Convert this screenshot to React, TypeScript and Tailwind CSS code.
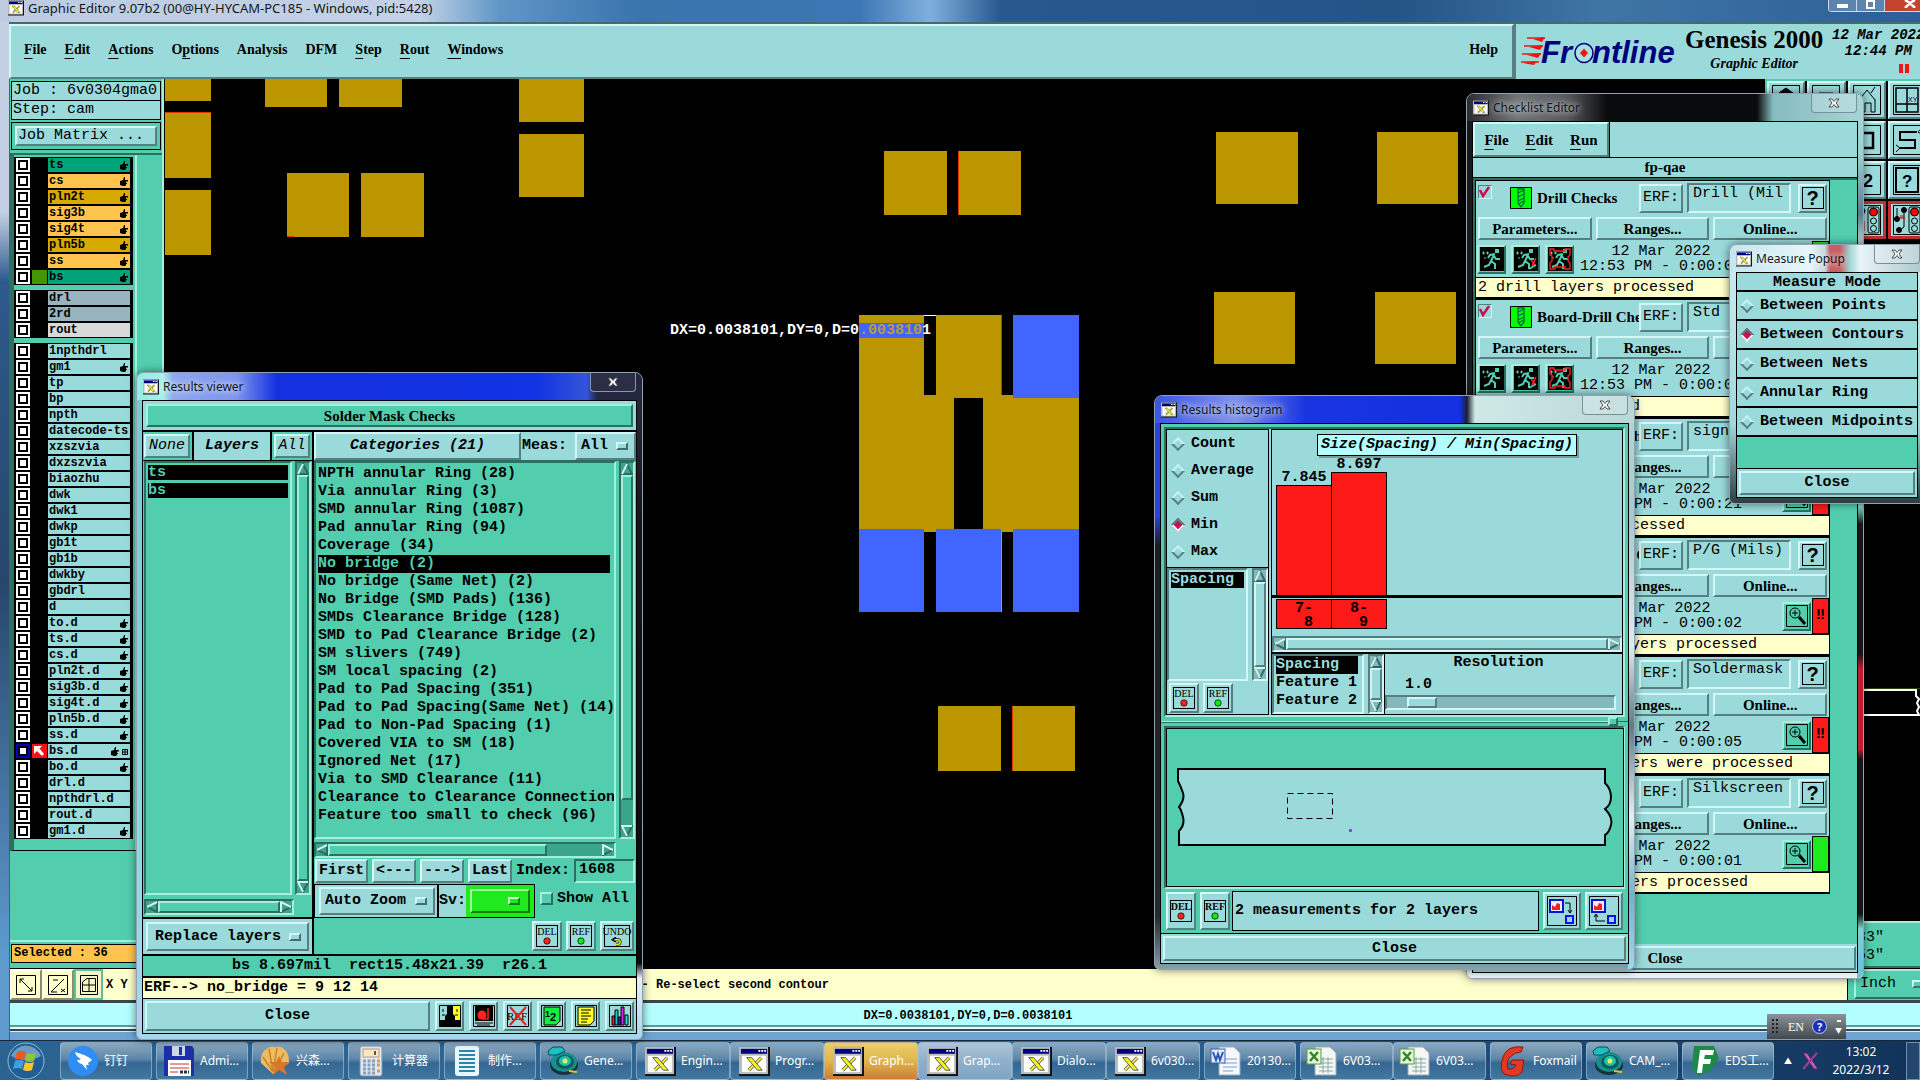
import type { ReactNode } from 'react'
import clsx from 'clsx'

const mono = "font-['Liberation_Mono',monospace] text-[15px] leading-[18px]"
const monoSmall = "font-['Liberation_Mono',monospace] font-bold text-[12px] leading-[16px]"
const serif = "font-['Liberation_Serif',serif] text-[14px] leading-[18px] font-bold"
const serifLg = "font-['Liberation_Serif',serif] text-[15px] leading-[18px] font-bold"
const uiFont = "font-['Noto_Sans','Noto_Sans_CJK_SC',sans-serif]"
const ui = "font-['Noto_Sans','Noto_Sans_CJK_SC',sans-serif] text-[12px] leading-[16px]"

const raised = 'border-2 border-t-[#d3f6f6] border-l-[#d3f6f6] border-b-[#557f80] border-r-[#557f80] bg-[#9bdada]'
const sunken = 'border-2 border-t-[#557f80] border-l-[#557f80] border-b-[#d3f6f6] border-r-[#d3f6f6] bg-[#9bdada]'
const raisedGreen = 'border-2 border-t-[#a5f0dc] border-l-[#a5f0dc] border-b-[#2c7060] border-r-[#2c7060] bg-[#52ceae]'
const sunkenGreen = 'border-2 border-t-[#2c7060] border-l-[#2c7060] border-b-[#a5f0dc] border-r-[#a5f0dc] bg-[#52ceae]'

/* ---------- shared bits ---------- */

function Button({ className, children, label }: { className?: string; children?: ReactNode; label?: string }) {
  return (
    <button type="button" aria-label={label} className={clsx('flex items-center justify-center shrink-0 whitespace-pre', className)}>
      {children}
    </button>
  )
}

function Select({ value, label, className, handle = 'bg-[#9bdada]' }: { value: string; label: string; className?: string; handle?: string }) {
  return (
    <div className={clsx('flex items-center shrink-0', className)}>
      <select aria-label={label} defaultValue={value} className="appearance-none bg-transparent flex-1 min-w-0 pl-1 outline-none">
        <option>{value}</option>
      </select>
      <span className={clsx('w-3 h-2 mr-[6px] shrink-0 border-2 border-t-[#d3f6f6] border-l-[#d3f6f6] border-b-[#3f6f70] border-r-[#3f6f70]', handle)} />
    </div>
  )
}

function Arrow({ dir }: { dir: 'up' | 'down' | 'left' | 'right' }) {
  const d = { up: 'M6 1 L1 11 H11 Z', down: 'M1 1 H11 L6 11 Z', left: 'M1 6 L11 1 V11 Z', right: 'M11 6 L1 1 V11 Z' }[dir]
  const light = { up: 'M6 1 L1 11', down: 'M6 11 L1 1 H11', left: 'M11 1 L1 6', right: 'M1 11 V1 L11 6' }[dir]
  return (
    <svg width="12" height="12" viewBox="0 0 12 12" className="shrink-0">
      <path d={d} fill="none" stroke="#2f6a68" strokeWidth="2" />
      <path d={light} fill="none" stroke="#cdf7ee" strokeWidth="2" />
    </svg>
  )
}

const trough = (green?: boolean) =>
  green
    ? 'border-2 border-t-[#2c7060] border-l-[#2c7060] border-b-[#a5f0dc] border-r-[#a5f0dc] bg-[#3ba58b]'
    : 'border-2 border-t-[#557f80] border-l-[#557f80] border-b-[#d3f6f6] border-r-[#d3f6f6] bg-[#84b8ba]'

function VScroll({ green, thumb = 'flex-1' }: { green?: boolean; thumb?: string }) {
  return (
    <div className={clsx('w-[16px] shrink-0 flex flex-col items-center', trough(green))}>
      <Arrow dir="up" />
      <div className="flex-1 w-full flex flex-col">
        <div className={clsx('w-full', thumb, green ? raisedGreen : raised)} />
      </div>
      <Arrow dir="down" />
    </div>
  )
}

function HScroll({ green, thumb = 'flex-1' }: { green?: boolean; thumb?: string }) {
  return (
    <div className={clsx('h-[16px] shrink-0 flex items-center', trough(green))}>
      <Arrow dir="left" />
      <div className="flex-1 h-full flex">
        <div className={clsx('h-full', thumb, green ? raisedGreen : raised)} />
      </div>
      <Arrow dir="right" />
    </div>
  )
}

function XIcon({ size = 16 }: { size?: number }) {
  return (
    <svg width={size} height={size} viewBox="0 0 32 30" className="shrink-0">
      <rect width="32" height="30" fill="#111" />
      <rect width="30" height="28" fill="#b9b9b9" />
      <rect x="2" y="2" width="27" height="5" fill="#000080" />
      <path d="M20 4h2m1 0h2m1 0h2" stroke="#fff" strokeWidth="2" />
      <rect x="3" y="9" width="25" height="17" fill="#fff" />
      <path d="M23 11 l-13 13" stroke="#555" strokeWidth="3.500" />
      <path d="M23 11 l-13 13" stroke="#f5f51e" strokeWidth="2" />
      <path d="M8 11 h5 l11 13 h-5z" fill="#f5f51e" stroke="#555" />
    </svg>
  )
}

function CloseX({ dark }: { dark?: boolean }) {
  return (
    <button type="button" aria-label="Close window" className={clsx('w-[46px] h-[19px] shrink-0 self-start rounded-b border border-t-0 flex items-center justify-center', dark ? 'border-[#8d93b8] bg-[#2b2e45]' : 'border-[#7b8f98] bg-white/20')}>
      <svg width="12" height="10" viewBox="0 0 12 10">
        <path d="M1 1h3l2 2.500 2-2.500h3L8 5l3 4H8L6 6.500 4 9H1l3-4z" fill="#fff" stroke="#444c55" strokeWidth="1" />
      </svg>
    </button>
  )
}

type WinProps = { title: string; className: string; bar: string; edge?: string; dark?: boolean; children: ReactNode }

// edge paints the glass strip to the right of the client area
function Win({ title, className, bar, edge, dark, children }: WinProps) {
  return (
    <section className={clsx('absolute flex flex-col rounded-t-lg rounded-b-md border border-[#8fa3b5] px-[5px] pb-[5px] overflow-hidden shadow-[0_0_8px_#0008]', className)}>
      {edge && <span className={clsx('absolute right-0 inset-y-0 w-[6px]', edge)} />}
      <header className={clsx('relative h-[27px] shrink-0 -mx-[5px] px-[6px] flex items-center gap-1', bar)}>
        <XIcon />
        <h2 className={clsx(ui, 'flex-1 text-[#101820] [text-shadow:0_0_6px_#ffffffcc,0_0_10px_#ffffff99]')}>{title}</h2>
        <CloseX dark={dark} />
      </header>
      {children}
    </section>
  )
}

function TagIcon({ text, fill }: { text: string; fill: string }) {
  return (
    <span className={clsx('h-[22px] border border-black flex flex-col items-center font-[\'Liberation_Serif\',serif] text-[10px] leading-[11px]', text === 'UNDO' ? 'w-[26px] text-[9px]' : 'w-[22px]')}>
      {text}
      {text === 'UNDO' ? (
        <svg width="12" height="10" viewBox="0 0 12 10">
          <path d="M3 3h4a2.500 2.500 0 0 1 0 5H5M5 1L2 3l3 2" fill="none" stroke="#000" strokeWidth="3" />
          <path d="M3 3h4a2.500 2.500 0 0 1 0 5H5" fill="none" stroke="#ff0" strokeWidth="1.500" />
        </svg>
      ) : (
        <svg width="8" height="8" viewBox="0 0 8 8">
          <circle cx="4" cy="4" r="3.200" fill={fill} stroke="#000" strokeWidth=".7" />
        </svg>
      )}
    </span>
  )
}

function Radio({ name, label, checked }: { name: string; label: string; checked?: boolean }) {
  return (
    <label className="flex items-center gap-[6px] h-[27px] whitespace-nowrap">
      <input
        type="radio"
        name={name}
        defaultChecked={checked}
        className="appearance-none size-[10px] m-[2px] rotate-45 shrink-0 border-2 border-t-[#c9f2f2] border-l-[#c9f2f2] border-b-[#557f80] border-r-[#557f80] checked:bg-[#c8104e] checked:border-t-[#557f80] checked:border-l-[#557f80] checked:border-b-[#f2fcfc] checked:border-r-[#f2fcfc]"
      />
      {label}
    </label>
  )
}

/* ---------- main window: header ---------- */

const menus = [['', 'F', 'ile'], ['', 'E', 'dit'], ['', 'A', 'ctions'], ['O', 'p', 'tions'], ['Analysis', '', ''], ['DFM', '', ''], ['', 'S', 'tep'], ['', 'R', 'out'], ['', 'W', 'indows']]

function MenuItem({ parts }: { parts: string[] }) {
  return (
    <button type="button">
      {parts[0]}
      <span className="underline underline-offset-4">{parts[1]}</span>
      {parts[2]}
    </button>
  )
}

function TitleBar() {
  return (
    <header className="h-[22px] shrink-0 flex items-start bg-[linear-gradient(to_right,#bccbe0_0,#c3d2e6_420px,#5f96c6_500px,#3a74ad_640px,#3d77b3_860px,#7fb0dc_930px,#27598f_1000px,#245587_1400px,#3f75a5_1600px,#2d5f95_1920px)]">
      <div className="flex items-center gap-1 pl-[8px]">
        <XIcon />
        <h1 className={clsx(uiFont, 'text-[13px] leading-[14px] text-[#101820]')}>Graphic Editor 9.07b2 (00@HY-HYCAM-PC185 - Windows, pid:5428)</h1>
      </div>
      <div className="ml-auto -mr-4 flex h-[12px] rounded-b overflow-hidden border border-t-0 border-[#c8dcee] text-white">
        <button type="button" aria-label="Minimize" className="w-[28px] bg-[#5d84ac] border-r border-[#c8dcee] flex items-center justify-center"><span className="w-[11px] h-[4px] bg-white" /></button>
        <button type="button" aria-label="Restore" className="w-[28px] bg-[#5d84ac] border-r border-[#c8dcee] flex items-start justify-center"><span className="size-[9px] border-2 border-white" /></button>
        <button type="button" aria-label="Close" className="w-[50px] bg-[#c4452f] flex items-start justify-center">
          <svg width="12" height="8" viewBox="0 0 12 8"><path d="M1 0l5 3 5-3M1 8l5-5 5 5" stroke="#fff" strokeWidth="2.500" fill="none" /></svg>
        </button>
      </div>
    </header>
  )
}

function MenuBar() {
  return (
    <div className="h-[57px] shrink-0 flex bg-[#9bdada] border-t-2 border-[#49696c]">
      <nav className={clsx(serif, 'flex-1 flex items-center pl-[13px] pr-[14px] pb-[3px] gap-[18px] border-2 border-t-[#d3f6f6] border-l-[#d3f6f6] border-b-[#557f80] border-r-[#557f80]')}>
        {menus.map((m) => <MenuItem key={m.join('')} parts={m} />)}
        <button type="button" className="ml-auto">Help</button>
      </nav>
      <div className="w-[406px] shrink-0 flex items-center gap-1 pl-[5px] border-l-2 border-[#557f80] overflow-hidden">
        <svg width="160" height="34" viewBox="0 0 160 34" className="shrink-0">
          <g fill="#f01414">
            <path d="M12 4l12-2-3 5zM8 12l14-2-3 5zM6 20l14-2-3 5zM2 28l14-2-3 4z" />
            <path d="M6 3h18M3 11h19M1 19h19M0 27h18" stroke="#f01414" strokeWidth="1.500" />
          </g>
          <text x="20" y="28" fontFamily="Liberation Sans" fontSize="31" fontWeight="bold" fontStyle="italic" fill="#00007c">Fr</text>
          <ellipse cx="63" cy="18" rx="9" ry="9.500" fill="#a9e0e0" stroke="#00007c" strokeWidth="1.500" />
          <path d="M63 13.500l4 4.500-4 4.500-4-4.500z" fill="#f01414" />
          <text x="71" y="28" fontFamily="Liberation Sans" fontSize="31" fontWeight="bold" fontStyle="italic" fill="#00007c">ntline</text>
        </svg>
        <div className="shrink-0 text-center font-['Liberation_Serif',serif] font-bold pb-1">
          <p className="text-[25px] leading-[28px]">Genesis 2000</p>
          <p className="text-[14px] leading-[20px] italic">Graphic Editor</p>
        </div>
        <div className="shrink-0 w-[102px] text-center self-start pt-[3px] font-['Liberation_Mono',monospace] font-bold italic text-[14px] leading-[16px]">
          <p className="whitespace-nowrap">12 Mar 2022</p>
          <p>12:44 PM</p>
          <p className="flex justify-center gap-[2px] pt-[5px] pl-[52px]"><span className="w-[4px] h-[9px] bg-[#f01414]" /><span className="w-[4px] h-[9px] bg-[#f01414]" /></p>
        </div>
      </div>
    </div>
  )
}

/* ---------- main window: layer list ---------- */

type Layer = { name: string; bg?: string; hand?: boolean; mark?: string; active?: boolean }
const G = 'bg-[#00a37a]'
const O = 'bg-[#ffc44d]'
const D = 'bg-[#d6aa00]'

const layerGroups: Layer[][] = [
  [
    { name: 'ts', bg: G, hand: true }, { name: 'cs', bg: O, hand: true }, { name: 'pln2t', bg: D, hand: true }, { name: 'sig3b', bg: O, hand: true },
    { name: 'sig4t', bg: O, hand: true }, { name: 'pln5b', bg: D, hand: true }, { name: 'ss', bg: O, hand: true }, { name: 'bs', bg: G, hand: true, mark: 'bg-[#429600]' },
  ],
  [{ name: 'drl', bg: 'bg-[#98b4be]' }, { name: '2rd', bg: 'bg-[#98b4be]' }, { name: 'rout', bg: 'bg-[#d9d9d9]' }],
  [
    ...['1npthdrl', 'gm1*', 'tp', 'bp', 'npth', 'datecode-ts', 'xzszvia', 'dxzszvia', 'biaozhu', 'dwk', 'dwk1', 'dwkp', 'gb1t', 'gb1b', 'dwkby', 'gbdrl', 'd', 'to.d*', 'ts.d*', 'cs.d*', 'pln2t.d*', 'sig3b.d*', 'sig4t.d*', 'pln5b.d*', 'ss.d*'].map((n) => ({ name: n.replace('*', ''), hand: n.endsWith('*') })),
    { name: 'bs.d', hand: true, active: true },
    { name: 'bo.d', hand: true }, { name: 'drl.d' }, { name: 'npthdrl.d' }, { name: 'rout.d' }, { name: 'gm1.d', hand: true },
  ],
]

function LayerRow({ layer }: { layer: Layer }) {
  return (
    <li className="h-[16px] flex bg-black pl-[2px] py-px">
      <input type="checkbox" aria-label={`Show ${layer.name}`} className={clsx('appearance-none size-[14px] shrink-0 bg-white border-2 shadow-[inset_0_0_0_2px_#000]', layer.active ? 'border-[#0000c0]' : 'border-white')} />
      <span className={clsx('w-[15px] ml-[2px] mr-px shrink-0', layer.mark, layer.active && 'bg-[#ff1010]')}>
        {layer.active && <svg width="14" height="14" viewBox="0 0 14 14"><path d="M2 2h8L7.500 4.500 12 10l-2 2-5-5L2 10z" fill="#fff" /></svg>}
      </span>
      <button type="button" className={clsx('w-[82px] flex items-center justify-between whitespace-nowrap pl-px pr-[2px]', layer.bg ?? 'bg-[#9bdada]')}>
        <span>{layer.name}</span>
        {layer.hand && (
          <svg width={layer.active ? 17 : 8} height="9" viewBox={layer.active ? '0 0 17 9' : '0 0 8 9'} className="shrink-0">
            <path d="M0 4l3-1 1-3h1v3h3v1.500H6V6h1v1H6v1h-.500v1H3L0 8z" fill="#000" />
            {layer.active && <path d="M11.500 2.500h5v5h-5zM14 2v6M11 5h6" stroke="#000" fill="none" />}
          </svg>
        )}
      </button>
    </li>
  )
}

function Sidebar() {
  return (
    <aside className="w-[155px] shrink-0 bg-[#52ceae] flex flex-col border-l border-r-2 border-l-[#2c7060] border-r-[#a5f0dc] pt-[2px]">
      <div className={clsx(mono, 'mx-px border border-black bg-[#9bdada] divide-y divide-black')}>
        <p className="h-[19px] px-px whitespace-nowrap">Job : 6v0304gma0</p>
        <p className="h-[18px] px-px">Step: cam</p>
      </div>
      <div className="mx-px mt-[2px] border border-black p-[3px]">
        <Button className={clsx(mono, raised, 'w-full h-[20px] justify-start pl-px')}>Job Matrix ...</Button>
      </div>
      <div className="mt-[3px] border-t-2 border-[#2c7060] flex">
        <div className="w-[127px] border-l-4 border-[#2c7060] border-b border-r-2 border-b-black border-r-[#a5f0dc] pt-[2px] pb-[11px] flex flex-col gap-[5px] font-['Liberation_Mono',monospace] font-bold text-[12px] leading-[14px]">
          {layerGroups.map((g, i) => (
            <ul key={i} className="w-[119px]">
              {g.map((l) => <LayerRow key={l.name} layer={l} />)}
            </ul>
          ))}
        </div>
      </div>
      <div className="mt-auto border-t-2 border-[#a5f0dc] pt-[2px] pb-[5px] pl-px">
        <p className="h-[19px] border border-black bg-[#ffc44d] pl-[2px] font-['Liberation_Mono',monospace] font-bold text-[12px] leading-[17px]">Selected : 36</p>
      </div>
    </aside>
  )
}

/* ---------- main window: canvas ---------- */

// x, y, width, height in window coordinates
const pads = [
  [165, 79, 46, 22], [165, 113, 46, 65], [165, 190, 46, 65], [265, 79, 62, 28], [339, 79, 63, 28], [287, 173, 62, 64], [361, 173, 63, 64],
  [519, 79, 65, 43], [519, 134, 65, 63], [884, 151, 63, 64], [959, 151, 62, 64], [1216, 132, 82, 72], [1214, 292, 81, 72], [1377, 132, 81, 72], [1375, 292, 81, 72],
  [859, 315, 65, 214], [936, 315, 65, 83], [924, 395, 30, 137], [954, 395, 29, 3], [983, 395, 96, 137], [938, 706, 63, 65], [1013, 706, 62, 65],
]
const selected = [[1013, 315, 66, 83], [859, 529, 65, 83], [936, 529, 65, 83], [1013, 529, 66, 83], [859, 323, 65, 15]]
const edges = [[165, 112, 46, 1], [287, 236, 7, 1], [958, 151, 1, 64], [1001, 315, 1, 80], [1012, 706, 1, 65]]

function Canvas() {
  return (
    <main className="relative flex-1 min-w-0 bg-black overflow-hidden">
      <svg className="absolute inset-0 size-full">
        <g transform="translate(-164 -79)" shapeRendering="crispEdges">
          {pads.map(([x, y, w, h], i) => <rect key={i} x={x} y={y} width={w} height={h} fill="#bc9600" />)}
          {selected.map(([x, y, w, h], i) => <rect key={i} x={x} y={y} width={w} height={h} fill="#4066ff" />)}
          {edges.map(([x, y, w, h], i) => <rect key={i} x={x} y={y} width={w} height={h} fill="#e03400" />)}
          <rect x="924" y="315" width="12" height="1" fill="#fff" />
          <rect x="1001" y="532" width="1" height="80" fill="#00d8ff" />
        </g>
      </svg>
      <p className={clsx(mono, 'absolute left-[506px] top-[243px] font-bold text-white whitespace-nowrap')}>
        DX=0.0038101,DY=0,D=0<span className="text-[#bc9a3c]">.003810</span>1
      </p>
    </main>
  )
}

/* ---------- main window: right tool box ---------- */

const frame = <path d="M.500.500h27v29H.500z" />
const blank = <g>{frame}<path d="M6 7h16v16H6z" /></g>
const lights = (x: number) => (
  <g>
    <rect x={x} y="2" width="11" height="26" rx="2" />
    <circle cx={x + 5.5} cy="7" r="4" fill="red" />
    <circle cx={x + 5.5} cy="16" r="3" />
    <circle cx={x + 5.5} cy="23.500" r="3" />
  </g>
)

const tools: ReactNode[] = [
  <g>{frame}<path d="M14 3l7 5h-4v9h-6V8H7z" fill="#000" /></g>,
  <g>{frame}<path d="M7 8h14M14 8v14" /></g>,
  <g>{frame}<path d="M6 15L14 5l8 10M8 14v13h4v-9h6v9h4V14M18 8l4-6" /></g>,
  <g>{frame}<path d="M3 3h22v24H3zM14 3v24M3 19h22" strokeWidth="1.500" /><text x="15" y="17" fontSize="7" fill="#000" stroke="none">XY</text></g>,
  blank,
  blank,
  <g>{frame}<path d="M4 8h16v15H4z" strokeWidth="2.500" /></g>,
  <g>{frame}<path d="M24 7H7v8h15v8H7" strokeWidth="2" /><path d="M28 4l-3 3 3 2M3 20l4 3-4 4" /></g>,
  blank,
  blank,
  <g>{frame}<text x="4" y="22" fontSize="18" fontWeight="bold" fill="#000" stroke="none">:2</text></g>,
  <g>{frame}<path d="M3 3h22v24H3z" strokeWidth="2" /><text x="9" y="22" fontSize="17" fontWeight="bold" fill="#000" stroke="none">?</text></g>,
  blank,
  blank,
  <g>{frame}{lights(15)}<circle cx="9" cy="6" r="3" fill="#00c" /><path d="M5 16h6v10" stroke="#d00" /></g>,
  <g>{frame}{lights(16)}<g fill="#000"><circle cx="4" cy="14" r="2.500" /><circle cx="11" cy="5" r="2.500" /><circle cx="6" cy="25" r="2.500" /></g><path d="M4 3v10M11 5v17l-4 3" /><path d="M6 13h6M8 10v3M10 10v3" stroke="#d00" /></g>,
]

function ToolBox() {
  return (
    <aside className="w-[155px] shrink-0 bg-black flex flex-col overflow-hidden">
      <div className="w-[163px] pl-[2px] pt-[2px] grid grid-cols-4 bg-[#52ceae]">
        {tools.map((t, i) => (
          <button key={i} type="button" aria-label={`Tool ${i + 1}`} className="h-[40px] bg-black pb-[2px] pr-[2px]">
            <span className={clsx('size-full flex items-center justify-center', raised, i > 11 && 'outline-3 -outline-offset-3 outline-[#c03030]')}>
              <svg width="28" height="30" viewBox="0 0 28 30" fill="none" stroke="#000" fontFamily="Liberation Sans" className="shrink-0">{t}</svg>
            </span>
          </button>
        ))}
      </div>
      <svg width="155" height="30" className="mt-[447px] shrink-0">
        <path d="M97 2h54v6l3 3-2 4 2 4-2 4 2 4H97" stroke="#fff" strokeWidth="2" fill="none" />
        <path d="M94 0h61" stroke="#4f8a10" />
      </svg>
      <div className={clsx(mono, raisedGreen, 'mt-auto h-[47px] -mr-1 pl-[90px] pt-[6px] leading-[15px]')}>
        <p>33"</p>
        <p>53"</p>
      </div>
    </aside>
  )
}

function BottomBars() {
  const cell = 'w-[32px] h-[31px] shrink-0 border-2 border-t-[#ffffee] border-l-[#ffffee] border-b-[#8c8c70] border-r-[#8c8c70]'
  return (
    <footer className="shrink-0 flex flex-col border-l border-[#2c7060]">
      <div className="h-[32px] flex items-center bg-[#ffffcc] border-t border-black">
        <Button label="Measure" className={clsx(cell, 'bg-[#ffffcc]')}><svg width="22" height="22" fill="none" stroke="#000"><path d="M1.500 1.500h19v19h-19zM5 5l12 12M5 9V5h4M17 13v4h-4" /></svg></Button>
        <Button label="Offset" className={clsx(cell, 'bg-[#ffffcc] border-x-black/70')}><svg width="22" height="22" fill="none" stroke="#000"><path d="M1.500 1.500h19v19h-19zM4 18L17 5M4 18h6M6 6h5M14 15l4 3M18 15l-4 3" /></svg></Button>
        <Button label="Grid" className="w-[29px] h-[31px] shrink-0 border-2 border-[#5fbfa0] bg-[#f4f6c4]"><svg width="20" height="22" fill="none" stroke="#000"><path d="M1.500 1.500h17v19h-17zM8 4.500h8.500v13h-13V8zM10 4v14M4 11h13" /></svg></Button>
        <p className={clsx(monoSmall, 'pl-[3px] whitespace-pre')}>X Y</p>
        <p className={clsx(monoSmall, 'pl-[514px] whitespace-nowrap')}>- Re-select second contour</p>
        <div className="ml-auto w-[73px] self-stretch shrink-0 border-l border-black bg-[#52ceae] overflow-hidden">
          <Select label="Units" value="Inch" handle="bg-[#52ceae]" className={clsx(mono, raisedGreen, 'w-[78px] h-[30px] ml-[6px]')} />
        </div>
      </div>
      <div className="h-[31px] border-t-[3px] border-b-2 border-t-[#37474b] border-b-[#37474b] shadow-[inset_0_-2px_0_#e4ffff,inset_0_-4px_0_#5c9a9c] bg-[#b3ffff] flex items-center justify-center pl-[6px]">
        <p className={monoSmall}>DX=0.0038101,DY=0,D=0.0038101</p>
      </div>
      <div className="h-[9px] bg-[#6ea4cf] border-t border-[#d0ecf6]" />
    </footer>
  )
}

/* ---------- results viewer ---------- */

const categories = [
  'NPTH annular Ring (28)', 'Via annular Ring (3)', 'SMD annular Ring (1087)', 'Pad annular Ring (94)', 'Coverage (34)', 'No bridge (2)', 'No bridge (Same Net) (2)',
  'No Bridge (SMD Pads) (136)', 'SMDs Clearance Bridge (128)', 'SMD to Pad Clearance Bridge (2)', 'SM slivers (749)', 'SM local spacing (2)', 'Pad to Pad Spacing (351)',
  'Pad to Pad Spacing(Same Net) (14)', 'Pad to Non-Pad Spacing (1)', 'Covered VIA to SM (18)', 'Ignored Net (17)', 'Via to SMD Clearance (11)',
  'Clearance to Clearance Connection', 'Feature too small to check (96)',
]

const footIcons = [
  <g key="a"><path d="M0 0h11v22H0z" fill="#9bdada" /><path d="M11 0h11v22H11z" fill="#ff2" /><path d="M8 0h6v9l2 2v4h6v7H0v-7h6v-4l2-2z" fill="#000" /><path d="M4 4v3M3 10h3M18 4v3M16 10h3" stroke="#000" /></g>,
  <g key="b"><path d="M2 1h18v15H2z" fill="#000" /><circle cx="9" cy="10" r="4.500" fill="#f22" /><path d="M15 3v11H9" stroke="#f22" strokeWidth="1.500" fill="none" /><path d="M2 18h18M4 20h13" stroke="#000" /></g>,
  <g key="c"><text x="0" y="15" fontSize="11" fontFamily="Liberation Serif">REF</text><path d="M3 2l16 18M19 2L3 20" stroke="#e02020" strokeWidth="2" /></g>,
  <g key="d"><path d="M3 2h16v14l-4 4H3z" fill="#10f040" stroke="#000" /><text x="4" y="12" fontSize="9" fontWeight="bold" fontFamily="Liberation Sans">1</text><text x="9" y="16" fontSize="11" fontWeight="bold" fontFamily="Liberation Sans">2</text></g>,
  <g key="e"><path d="M3 2h16v14l-4 4H3z" fill="#ff2" stroke="#000" /><path d="M6 5h10M6 8h8M6 11h10M6 14h7M6 17h6" stroke="#000" /></g>,
  <g key="f" stroke="#000"><path d="M3 11h3v9H3z" fill="#e22" /><path d="M6 5h3v15H6z" fill="#1cc" /><path d="M9 12h3v8H9z" fill="#22d" /><path d="M12 2h3v18h-3z" fill="#d2e" /><path d="M16 10h3v10h-3z" fill="#3dd" /></g>,
]

function ResultsViewer() {
  return (
    <Win
      title="Results viewer"
      dark
      edge="bg-[linear-gradient(to_bottom,#2a2d3a_0,#14161a_150px,#08090a_590px,#e8f0f4_605px,#a9d4f0_664px)]"
      className="left-[136px] top-[372px] w-[507px] bg-[linear-gradient(to_bottom,#79c9cf_0,#8fd9e2_500px,#a9d4f0_640px)]"
      bar="bg-[linear-gradient(to_right,#93ece2_0,#a9f0e8_26px,#8fa8ee_36px,#7d94ee_100px,#1430e0_140px,#1234e4_400px,#3454d8_450px,#23283f_460px,#23283f_507px)]"
    >
      <div className={clsx(mono, 'relative border border-black bg-black flex flex-col gap-[2px]')}>
        <div className="bg-[#9bdada] p-[3px]">
          <p className={clsx(serifLg, raisedGreen, 'h-[23px] flex items-center justify-center')}>Solder Mask Checks</p>
        </div>
        <div className="flex gap-[2px]">
          <div className="w-[169px] shrink-0 flex flex-col bg-[#52ceae]">
            <div className="flex h-[29px] border-b border-black italic">
              <Button className={clsx(raised, 'w-[46px] m-[2px] ml-px')}>None</Button>
              <p className="flex-1 border-x-2 border-black bg-[#9bdada] font-bold flex items-center justify-center">Layers</p>
              <Button className={clsx(raised, 'w-[36px] m-[2px]')}>All</Button>
            </div>
            <div className="flex-1 flex gap-[3px] px-px">
              <ul className={clsx(sunkenGreen, 'flex-1 p-[2px] flex flex-col gap-[3px] text-[#52ceae] leading-[15px] font-bold')}>
                <li className="bg-black">ts</li>
                <li className="bg-black">bs</li>
              </ul>
              <VScroll green />
            </div>
            <div className="pt-[4px] pb-[2px] pl-px pr-[18px]"><HScroll green /></div>
            <div className="border-t-2 border-black bg-[#9bdada] p-[3px]">
              <Select label="Layer action" value="Replace layers" className={clsx(raised, 'h-[29px] font-bold pl-[3px]')} />
            </div>
          </div>
          <div className="flex-1 min-w-0 flex flex-col bg-[#52ceae] font-bold">
            <div className="flex items-center h-[29px] bg-[#9bdada] border-b border-[#2c7060]">
              <Button className={clsx(raised, 'w-[207px] h-[28px] italic')}>Categories (21)</Button>
              <p className="flex-1 pl-px">Meas:</p>
              <Select label="Measurements" value="All" className={clsx(raised, 'w-[61px] h-[28px]')} />
            </div>
            <div className="flex gap-[3px] pr-px">
              <ul className={clsx(sunkenGreen, 'flex-1 min-w-0 pt-[2px] pl-[2px] pb-[12px]')}>
                {categories.map((c) => (
                  <li key={c} className={clsx('whitespace-nowrap overflow-hidden', c === 'No bridge (2)' && 'bg-black text-[#52ceae] mr-1')}>{c}</li>
                ))}
              </ul>
              <VScroll green thumb="h-[325px]" />
            </div>
            <div className="pt-[3px] pr-[20px]"><HScroll green thumb="w-[80%]" /></div>
            <div className="flex items-center gap-[4px] h-[26px] px-px">
              <Button className={clsx(raised, 'w-[53px] h-[24px]')}>First</Button>
              <Button className={clsx(raised, 'w-[44px] h-[24px]')}>{'<---'}</Button>
              <Button className={clsx(raised, 'w-[44px] h-[24px]')}>{'--->'}</Button>
              <Button className={clsx(raised, 'w-[44px] h-[24px]')}>Last</Button>
              <label htmlFor="index">Index:</label>
              <input id="index" defaultValue="1608" className={clsx(sunkenGreen, 'flex-1 min-w-0 h-[24px] pl-[3px] pb-[3px] outline-none')} />
            </div>
            <div className="flex items-center h-[34px]">
              <div className="flex self-stretch border border-black bg-[#9bdada]">
                <Select label="Zoom mode" value="Auto Zoom" className={clsx(raised, 'w-[116px] m-[2px] ml-[4px]')} />
                <label htmlFor="sv" className="border-l-2 border-black flex items-center">Sv:</label>
                <div className="bg-[#1eea1e] p-1 w-[68px] flex">
                  <div className="flex-1 flex items-center justify-end pr-2 border-2 border-t-[#a0ffa0] border-l-[#a0ffa0] border-b-[#108010] border-r-[#108010]">
                    <select id="sv" className="appearance-none bg-transparent flex-1 w-2"><option></option></select>
                    <span className="w-3 h-2 border-2 border-t-[#d3ffd3] border-l-[#d3ffd3] border-b-[#108010] border-r-[#108010]" />
                  </div>
                </div>
              </div>
              <label className="flex items-center gap-1 pl-[5px] pb-[5px] whitespace-nowrap">
                <input type="checkbox" className={clsx(raisedGreen, 'appearance-none size-[13px] border')} />
                Show All
              </label>
            </div>
            <div className="flex-1 min-h-[36px] flex items-center justify-end gap-[4px] pr-[2px] font-normal">
              <Button label="DEL" className={clsx(raised, 'size-[30px]')}><TagIcon text="DEL" fill="#f22" /></Button>
              <Button label="REF" className={clsx(raised, 'size-[30px]')}><TagIcon text="REF" fill="#1e1" /></Button>
              <Button label="UNDO" className={clsx(raised, 'w-[34px] h-[30px]')}><TagIcon text="UNDO" fill="#ff0" /></Button>
            </div>
          </div>
        </div>
        <p className="h-[20px] bg-[#52ceae] font-bold text-center leading-[20px] whitespace-pre">bs 8.697mil  rect15.48x21.39  r26.1</p>
        <p className="h-[20px] bg-[#ffffcc] font-bold pl-px leading-[20px]">ERF--&gt; no_bridge = 9 12 14</p>
        <div className="bg-[#9bdada] flex items-center gap-[5px] p-[2px] -mt-px">
          <Button className={clsx(raised, 'flex-1 h-[30px] font-bold')}>Close</Button>
          {footIcons.map((ic, i) => (
            <Button key={i} label={`Result tool ${i + 1}`} className={clsx(raised, 'w-[29px] h-[30px]')}>
              <svg width="22" height="22" viewBox="0 0 22 22" className="shrink-0">
                {ic}
                <path d="M.500.500h21v21H.500z" fill="none" stroke="#000" />
              </svg>
            </Button>
          ))}
        </div>
      </div>
    </Win>
  )
}

/* ---------- checklist editor ---------- */

const checks = [
  { name: 'Drill Checks', erf: 'Drill (Mil', time: '0:00:01', msg: '2 drill layers processed', flag: 'bg-[#1eea1e]' },
  { name: 'Board-Drill Checks', erf: 'Std', time: '0:00:01', msg: '2 layers processed', flag: 'bg-[#1eea1e]' },
  { name: 'Signal Layer Checks', erf: 'sign', time: '0:00:21', msg: '4 etch layers processed', flag: 'bg-[#ff1a1a]' },
  { name: 'Power/Ground Chk', erf: 'P/G (Mils)', time: '0:00:02', msg: '2 power/ground layers processed', flag: 'bg-[#ff1a1a]' },
  { name: 'Solder Mask', erf: 'Soldermask', time: '0:00:05', msg: '2 solder mask layers were processed', flag: 'bg-[#ff1a1a]' },
  { name: 'Silkscreen', erf: 'Silkscreen', time: '0:00:01', msg: '2 silk screen layers processed', flag: 'bg-[#1eea1e]' },
]

function Runner({ kind }: { kind: number }) {
  return (
    <svg width="24" height="24" viewBox="0 0 24 24" className="bg-black shrink-0">
      <path d="M15 2h4v4h-4z" fill="#52ceae" />
      <path d="M15 7l-5 1-2 3M14 8l-3 6 4 3v5M11 14l-2 4-5 2M14 9l2 3h4" fill="none" stroke="#52ceae" strokeWidth="2" />
      <path d="M2 6h3M3.500 4.500v3M6 6h3M7.500 4.500v3M4 11h2" stroke="#52ceae" />
      {kind === 1 && <path d="M18 19l4-8M17 13l4 5" stroke="#f22" strokeWidth="1.500" />}
      {kind === 1 && <path d="M15 22l7-4" stroke="#52ceae" strokeWidth="1.500" />}
      {kind === 2 && <path d="M2 2h4v2h11V2h5v6l-2 2v4l2 2v6h-5v-2H7v2H2v-6l2-2V9L2 8z" fill="none" stroke="#f22" strokeWidth="1.300" />}
    </svg>
  )
}

function CheckRow({ check }: { check: (typeof checks)[number] }) {
  const b = clsx(serifLg, raised, 'flex-1 h-[23px]')
  return (
    <li className="border-x border-t border-black border-b-2 bg-[#9bdada] flex flex-col">
      <div className="flex items-center h-[34px] px-[2px]">
        <label className="flex items-center shrink-0">
          <input type="checkbox" aria-label={check.name} defaultChecked className="sr-only" />
          <svg width="14" height="14" viewBox="0 0 14 14" className="mb-[12px]">
            <path d="M13.500.500v13H.500" fill="none" stroke="#d3f6f6" />
            <path d="M.500 13.500V.500h13" fill="none" stroke="#557f80" />
            <path d="M2 5l3 6 6-9" fill="none" stroke="#c8104e" strokeWidth="2.500" />
          </svg>
        </label>
        <svg width="22" height="22" viewBox="0 0 22 22" className="ml-[18px] shrink-0">
          <path d="M.500.500h21v21H.500z" fill="#0f0" stroke="#000" />
          <path d="M8 2h6v14l-3 4-3-4zM8 6l6-3M8 10l6-3M8 14l6-3M8 17l6-3" fill="none" stroke="#064" strokeWidth="1.300" />
        </svg>
        <p className={clsx(serifLg, 'w-[107px] pl-[5px] shrink-0 whitespace-nowrap overflow-hidden')}>{check.name}</p>
        <Button className={clsx(raised, 'w-[44px] h-[29px]')}>ERF:</Button>
        <input aria-label={`${check.name} ERF`} defaultValue={check.erf} className={clsx(sunken, 'w-[104px] h-[30px] ml-[4px] pl-[4px] pb-[9px] outline-none')} />
        <Button label="Help" className={clsx(raised, 'w-[29px] h-[29px] ml-auto')}><span className="size-[22px] border border-black flex items-center justify-center font-bold text-[20px] font-['Liberation_Sans',sans-serif]">?</span></Button>
      </div>
      <div className="flex gap-[4px] px-[2px] mt-[2px]">
        <Button className={b}>Parameters...</Button>
        <Button className={b}>Ranges...</Button>
        <Button className={b}>Online...</Button>
      </div>
      <div className="flex items-center h-[36px] mt-px pl-px gap-[5px]">
        {[0, 1, 2].map((k) => <Button key={k} label="Run" className={clsx(raisedGreen, 'size-[29px]')}><Runner kind={k} /></Button>)}
        <p className="w-[164px] leading-[15px] text-center whitespace-nowrap">12 Mar 2022<br />12:53 PM - {check.time}</p>
        <Button label="Zoom to results" className={clsx(raisedGreen, 'w-[29px] h-[29px] ml-auto')}>
          <svg width="22" height="22" fill="none" stroke="#000"><path d="M.500.500h21v21H.500z" /><circle cx="9" cy="8" r="5" /><path d="M9 5v6M6 8h6" /><path d="M13 12l6 7" strokeWidth="3" /></svg>
        </Button>
        <span className={clsx('w-[17px] self-stretch border border-black flex items-center justify-center font-bold -ml-[4px]', check.flag)}>{check.flag.includes('ff1a') && '‼'}</span>
      </div>
      <p className="h-[20px] border-t border-black bg-[#ffffcc] pl-[2px] leading-[19px]">{check.msg}</p>
    </li>
  )
}

function ChecklistEditor() {
  return (
    <Win
      title="Checklist Editor"
      edge="bg-[linear-gradient(to_bottom,#a8d5d6_0,#9fd0d4_60px,#5a7a90_120px,#d8e8ee_160px,#6a8c98_405px,#7fd8d0_412px,#141618_430px,#141618_560px,#c41c2c_575px,#c41c2c_655px,#141618_665px,#141618_820px,#7fd0d0_835px,#6fc4dc_870px)]"
      className="left-[1466px] top-[93px] w-[398px] h-[886px] bg-[linear-gradient(to_bottom,#16181a_0,#1d1f22_600px,#c8dfe2_870px,#f4f6f6_886px)]"
      bar="bg-[linear-gradient(to_right,#2a2d30_0,#70757a_50px,#55595d_100px,#0a0b0c_140px,#0a0b0c_290px,#86bcc0_306px,#a8d5d6_398px)]"
    >
      <div className={clsx(mono, 'relative flex-1 flex flex-col border border-black bg-[#9bdada]')}>
        <nav className={clsx(serifLg, raised, 'w-[136px] h-[35px] flex items-center justify-center gap-[17px] outline outline-black')}>
          <MenuItem parts={['', 'F', 'ile']} />
          <MenuItem parts={['', 'E', 'dit']} />
          <MenuItem parts={['', 'R', 'un']} />
        </nav>
        <p className={clsx(serifLg, 'h-[21px] border-y border-black text-center')}>fp-qae</p>
        <div className="flex-1 border-t-2 border-l-2 border-[#2c7060] bg-[#52ceae] pr-[27px]">
          <ul>{checks.map((c) => <CheckRow key={c.erf} check={c} />)}</ul>
        </div>
        <Button className={clsx(serifLg, raised, 'h-[24px] mx-px my-[2px]')}>Close</Button>
      </div>
    </Win>
  )
}

/* ---------- results histogram ---------- */

const bars = [
  { value: '7.845', range: ['7-', '8'], height: 'h-[110px]' },
  { value: '8.697', range: ['8-', '9'], height: 'h-[123px]' },
]

function Histogram() {
  return (
    <Win
      title="Results histogram"
      edge="bg-[linear-gradient(to_bottom,#b8d8d6_0,#a8c8cc_120px,#dcecee_250px,#5c7c84_330px,#e4f0f2_420px,#6fb4c4_500px,#9fdcf0_575px)]"
      className="left-[1154px] top-[395px] w-[481px] bg-[linear-gradient(to_bottom,#2c40dc_0,#2c40dc_120px,#1b1d22_150px,#25292d_520px,#8aa4b0_575px)]"
      bar="bg-[linear-gradient(to_right,#3a55e4_0,#7f92ea_80px,#1a34e0_150px,#1430e0_305px,#1a2030_312px,#cfe8e6_320px,#b8d8d6_481px)]"
    >
      <div className={clsx(mono, 'relative border border-black bg-[#52ceae] font-bold flex flex-col')}>
        <div className="m-[3px] mb-0 border-2 border-t-[#2c7060] border-l-[#2c7060] border-b-[#a5f0dc] border-r-[#a5f0dc] bg-[#9bdada] flex gap-[2px]">
          <div className="w-[103px] shrink-0 flex flex-col border border-black">
            <fieldset className="border-b border-black h-[138px] pl-[4px]">
              {['Count', 'Average', 'Sum', 'Min', 'Max'].map((l) => <Radio key={l} name="stat" label={l} checked={l === 'Min'} />)}
            </fieldset>
            <div className="flex gap-1 h-[113px]">
              <div className={clsx(sunken, 'flex-1 p-[2px]')}><p className="bg-black text-[#9bdada] leading-[16px]">Spacing</p></div>
              <VScroll />
            </div>
            <div className="flex items-center gap-1 h-[33px] pl-[2px] font-normal">
              <Button label="DEL" className={clsx(raised, 'size-[30px]')}><TagIcon text="DEL" fill="#f22" /></Button>
              <Button label="REF" className={clsx(raised, 'size-[30px]')}><TagIcon text="REF" fill="#1e1" /></Button>
            </div>
          </div>
          <div className="flex-1 min-w-0 flex flex-col border border-black">
            <div className="h-[168px] flex flex-col border-b-[3px] border-black">
              <p className="self-center mt-[4px] h-[22px] px-[3px] border border-black bg-[#b3ffff] italic leading-[20px] whitespace-nowrap shadow-[2px_2px_0_#7f9a9a] shrink-0">Size(Spacing) / Min(Spacing)</p>
              <div className="flex items-end flex-1 min-h-0 pl-[4px] text-center leading-[15px]">
                {bars.map((b) => (
                  <div key={b.value} className="w-[56px] -mr-px">
                    <p className="whitespace-nowrap">{b.value}</p>
                    <div className={clsx('bg-[#ff1a1a] border border-b-0 border-black', b.height)} />
                  </div>
                ))}
              </div>
            </div>
            <div className="flex pl-[4px] pt-px h-[38px] text-center leading-[14px]">
              {bars.map((b) => (
                <p key={b.value} className="w-[56px] h-[30px] -mr-px pt-[2px] bg-[#ff1a1a] border border-black">
                  {b.range[0]}<br />&nbsp;{b.range[1]}
                </p>
              ))}
            </div>
            <HScroll />
            <div className="flex flex-1 border-t-2 border-black">
              <ul className={clsx(sunken, 'w-[92px] shrink-0 pl-[2px] whitespace-nowrap')}>
                <li className="bg-black text-[#9bdada] mr-1">Spacing</li>
                <li>Feature 1</li>
                <li>Feature 2</li>
              </ul>
              <div className="pl-1 flex"><VScroll /></div>
              <div className="flex-1 border-l border-black pr-[6px] flex flex-col">
                <label htmlFor="res" className="text-center pr-1">Resolution</label>
                <p className="pl-[20px] pt-1">1.0</p>
                <input id="res" type="range" defaultValue={10} className="w-full h-[15px] mt-px appearance-none border-2 border-t-[#557f80] border-l-[#557f80] border-b-[#d3f6f6] border-r-[#d3f6f6] bg-[#84b8ba] [&::-webkit-slider-thumb]:appearance-none [&::-webkit-slider-thumb]:w-[30px] [&::-webkit-slider-thumb]:h-[11px] [&::-webkit-slider-thumb]:bg-[#9bdada] [&::-webkit-slider-thumb]:border-2 [&::-webkit-slider-thumb]:border-t-[#d3f6f6] [&::-webkit-slider-thumb]:border-l-[#d3f6f6] [&::-webkit-slider-thumb]:border-b-[#557f80] [&::-webkit-slider-thumb]:border-r-[#557f80]" />
              </div>
            </div>
          </div>
        </div>
        <div className="h-[9px] flex items-center">
          <span className="flex-1 h-[2px] bg-[#a5f0dc] border-b border-[#2c7060]" />
          <span className={clsx(raisedGreen, 'w-[10px] h-[9px]')} />
          <span className="w-[10px] h-px bg-[#2c7060]" />
        </div>
        <div className={clsx(sunkenGreen, 'mx-[3px]')}>
          <svg width="458" height="159" className="block outline outline-black -outline-offset-1">
            <path d="M12 41H439v14q6 6 6 14t-6 12q8 8 6 16t-6 10v10H13v-14q6-6 4-14t-4-10q6-8 4-14t-5-12z" fill="#9bdada" stroke="#000" strokeWidth="2" />
            <rect x="121.500" y="65.500" width="45" height="25" fill="none" stroke="#000" strokeDasharray="6 4" />
            <rect x="183" y="101" width="3" height="3" fill="#e020e0" />
          </svg>
        </div>
        <div className="flex items-center gap-[4px] px-[5px] py-[2px]">
          <Button label="DEL" className={clsx(raised, 'w-[30px] h-[38px]')}><TagIcon text="DEL" fill="#f22" /></Button>
          <Button label="REF" className={clsx(raised, 'w-[30px] h-[38px]')}><TagIcon text="REF" fill="#1e1" /></Button>
          <p className="flex-1 h-[40px] border border-black bg-[#9bdada] flex items-center pl-[2px] -ml-[2px]">2 measurements for 2 layers</p>
          {[0, 1].map((k) => (
            <Button key={k} label="Histogram view" className={clsx(raised, 'w-[38px] h-[38px]')}>
              <svg width="30" height="30" fill="none">
                <path d="M.500.500h29v29H.500z" stroke="#000" />
                <rect x="3" y="4" width="13" height="12" fill="#eef" stroke="#11c" strokeWidth="2" />
                <path d="M5 14V9l3 2 2-4 3 1v6z" fill="#e22" />
                <rect x="19" y="20" width="7" height="7" stroke="#11e" strokeWidth="2" />
                {k === 0 ? <path d="M18 7h5v10M21 14l2 3 2-3" stroke="#000" /> : <path d="M16 25H7v-6M5 21l2-3 2 3" stroke="#000" />}
              </svg>
            </Button>
          ))}
        </div>
        <div className="border-t border-black bg-[#9bdada] p-[2px]">
          <Button className={clsx(raised, 'w-full h-[25px]')}>Close</Button>
        </div>
      </div>
    </Win>
  )
}

/* ---------- measure popup ---------- */

function MeasurePopup() {
  return (
    <Win
      title="Measure Popup"
      className="left-[1729px] top-[244px] w-[198px] bg-[linear-gradient(to_bottom,#cfeef0_0,#9fd8dc_180px,#2a3c40_259px)]"
      bar="bg-[linear-gradient(to_right,#c4e6ee_0,#e6f6fa_80px,#c9d8dc_95px,#c85c60_100px,#c85c60_110px,#9fd8d4_120px,#e8f4f6_130px,#a8c4ca_198px)]"
    >
      <div className={clsx(mono, 'relative border border-black bg-[#9bdada] font-bold ml-px mr-[3px]')}>
        <p className="h-[17px] leading-[19px] text-center">Measure Mode</p>
        {['Points', 'Contours', 'Nets', 'Annular Ring', 'Midpoints'].map((m) => (
          <div key={m} className="h-[29px] border-t-2 border-black flex items-center pl-[3px]">
            <Radio name="measure" label={m === 'Annular Ring' ? m : `Between ${m}`} checked={m === 'Contours'} />
          </div>
        ))}
        <div className="h-[33px] bg-[#52ceae] border-t-2 border-black" />
        <div className="border-t border-black p-[2px]">
          <Button className={clsx(raised, 'w-full h-[24px]')}>Close</Button>
        </div>
      </div>
    </Win>
  )
}

/* ---------- taskbar ---------- */

const svg = (children: ReactNode) => <svg width="32" height="32" viewBox="0 0 32 32" className="shrink-0">{children}</svg>

const dragon = svg(
  <g>
    <ellipse cx="17" cy="20" rx="14" ry="10" fill="#16313c" />
    <ellipse cx="17" cy="17" rx="13" ry="10" fill="#178f8c" />
    <ellipse cx="18" cy="17" rx="9" ry="7" fill="#0e5a60" />
    <ellipse cx="18" cy="16" rx="6" ry="5" fill="#1fc0ac" />
    <circle cx="18" cy="16" r="2.500" fill="#d8f060" />
    <path d="M1 6l5-4 9 0 3 4-8 4-8 0z" fill="#1dbfc4" stroke="#0c4a52" />
    <path d="M22 26l8 1" stroke="#ddc43a" strokeWidth="2" />
  </g>,
)
const excel = svg(
  <g>
    <path d="M9 2h15l6 6v22H9z" fill="#f4f8f2" stroke="#9ab" />
    <path d="M13 14h14M13 18h14M13 22h14M13 26h14M17 12v16M22 12v16" stroke="#8aa" />
    <rect x="1" y="4" width="14" height="15" fill="#e9f5e4" stroke="#5a9a3e" />
    <path d="M4 7l8 9M12 7l-8 9" stroke="#2f8a1e" strokeWidth="2.500" />
  </g>,
)

const singles = [
  { label: '钉钉', icon: svg(<g><circle cx="16" cy="16" r="15" fill="#2f8df5" /><path d="M8 7q12 3 17 8l-4 3 1 2-3 0 1 5-5-6q-4-1-5-4 3 0 4-1-5-2-6-7z" fill="#fff" /></g>) },
  { label: 'Admi...', icon: svg(<g><path d="M1 1h28l2 3v27H1z" fill="#1c2fa8" /><path d="M9 1h13v10H9z" fill="#cfd8e8" /><path d="M16 2h3v8h-3z" fill="#1c2fa8" /><path d="M5 15h23v16H5z" fill="#fff" /><path d="M7 19h19M7 23h19M7 27h8" stroke="#c33" /><path d="M17 27h9" stroke="#333" strokeWidth="3" strokeDasharray="3 1" /></g>) },
  { label: '兴森...', icon: svg(<g><path d="M14 29L2 18Q1 9 6 5q5-5 10-3 6-2 10 3 4 3 4 13z" fill="#eebb62" /><path d="M14 27L4 12M14 27L10 4M14 27L18 3M16 25l9-17" stroke="#c98526" strokeWidth="1.500" /><path d="M20 11l3 6 8 0-6 5 3 8-8-5-6 5 2-8-6-5 7 0z" fill="#d9762a" /></g>) },
  { label: '计算器', icon: svg(<g><rect x="5" y="1" width="22" height="30" rx="2" fill="#dfe8f2" stroke="#7b93ad" /><rect x="8" y="4" width="16" height="8" fill="#fbe8c0" stroke="#b98" /><path d="M20 6v4" stroke="#555" strokeWidth="2" /><path d="M8 16h12M8 20h12M8 24h12M8 28h12" stroke="#8aa0b8" strokeWidth="3" strokeDasharray="3 1.500" /><path d="M22 16h3M22 20h3M22 26h3" stroke="#e0a040" strokeWidth="3" /></g>) },
  { label: '制作...', icon: svg(<g><rect x="4" y="1" width="24" height="30" rx="3" fill="#e9f7fd" /><path d="M8 6h16M8 10h16M8 14h16M8 18h16M8 22h16M8 26h16" stroke="#2b86ad" strokeWidth="2" /></g>) },
  { label: 'Gene...', icon: dragon },
]
const xWindows = ['Engin...', 'Progr...', 'Graph...', 'Grap...', 'Dialo...', '6v030...']
const rest = [
  [{ label: '20130...', icon: svg(<g><path d="M9 2h15l6 6v22H9z" fill="#f4f7fc" stroke="#9ab" /><path d="M13 14h14M13 18h14M13 22h14M13 26h10" stroke="#7fa0d0" /><rect x="1" y="4" width="14" height="14" fill="#dfe9f8" stroke="#3a62b0" /><path d="M3 7l3 8 2-6 2 6 3-8" fill="none" stroke="#2a55ae" strokeWidth="2" /></g>) }],
  [{ label: '6V03...', icon: excel }, { label: '6V03...', icon: excel }],
  [{ label: 'Foxmail', icon: svg(<path d="M27 2Q11 0 7 12T8 29q12 5 18-2l2-12H16l-2 4 6 1q-2 5-8 4-2-8 2-12 5-5 11-5z" fill="#e23a22" stroke="#8f1a10" />) }],
  [{ label: 'CAM_...', icon: dragon }],
  [{ label: 'EDS工...', icon: svg(<g><path d="M6 1h20l5 12-9 13-12 5-6-8z" fill="#1d8a4a" /><path d="M9 28L12 5h14l-1 5h-8l-1 4h7l-1 5h-7l-1 9z" fill="#fff" /></g>) }],
]

const task = 'h-full shrink-0 flex items-center gap-[5px] border border-[#a9c3d8]/60 rounded-sm overflow-hidden whitespace-nowrap text-white'
const glass = 'bg-[linear-gradient(to_bottom,#8ba9bf_0,#5d86a8_45%,#356792_55%,#41789f_100%)]'

function Taskbar() {
  return (
    <footer className={clsx(ui, 'h-[40px] shrink-0 flex items-stretch gap-[4px] pt-px bg-[linear-gradient(to_right,#2b628f_0,#2f6a98_1000px,#1d4c7d_1500px,#123359_1920px)] border-t border-[#16293c]')}>
      <button type="button" aria-label="Start" className="w-[56px] shrink-0 flex items-center justify-center pr-1">
        <svg width="38" height="38" viewBox="0 0 38 38">
          <circle cx="19" cy="19" r="18" fill="#1f5f94" stroke="#8fbcd8" />
          <path d="M4 14a16 16 0 0 1 30 0q-15 8-30 0z" fill="#9cc6de" opacity=".6" />
          <path d="M10 10q4-2 9 0l-2 8q-4-2-9 0z" fill="#ea5a24" />
          <path d="M20 11q4 2 9 0l-2 8q-4 2-9 0z" fill="#8cc63a" />
          <path d="M8 19q4-2 9 0l-2 8q-4-2-9 0z" fill="#3fa0e0" />
          <path d="M18 20q4 2 9 0l-2 8q-4 2-9 0z" fill="#fbc62c" />
        </svg>
      </button>
      {singles.map((t) => (
        <button key={t.label} type="button" className={clsx(task, glass, 'w-[92px] pl-[6px]')}>{t.icon}{t.label}</button>
      ))}
      <div className="flex">
        {xWindows.map((t) => (
          <button
            key={t}
            type="button"
            className={clsx(task, 'w-[94px] pl-[8px]', t === 'Graph...' ? 'bg-[linear-gradient(to_bottom,#eccf6a_0,#e0b64e_50%,#cf7c34_100%)]' : t === 'Grap...' ? 'bg-[linear-gradient(to_bottom,#b0c4d6_0,#8fb0cb_50%,#7ea4c4_100%)]' : glass)}
          >
            <XIcon size={31} />{t}
          </button>
        ))}
      </div>
      {rest.map((g, i) => (
        <div key={i} className="flex">
          {g.map((t, j) => <button key={j} type="button" className={clsx(task, glass, 'pl-[5px]', g.length > 1 ? 'w-[93px]' : 'w-[92px]')}>{t.icon}{t.label}</button>)}
        </div>
      ))}
      <div className="flex-1 flex items-center text-white">
        <span className="text-[8px] pl-[6px]">▲</span>
        <svg width="20" height="20" viewBox="0 0 20 20" className="ml-2"><path d="M3 2h4l11 16h-4z" fill="#c060b8" stroke="#602060" /><path d="M17 2L3 18" stroke="#a03c98" strokeWidth="2" /></svg>
        <div className="flex-1 text-center leading-[18px]"><p>13:02</p><p>2022/3/12</p></div>
      </div>
      <button type="button" aria-label="Show desktop" className="w-[14px] shrink-0 border border-[#6c8fb0] bg-[#24466c]" />
    </footer>
  )
}

function LanguageBar() {
  return (
    <div className={clsx(ui, 'absolute left-[1767px] top-[1014px] w-[79px] h-[25px] flex items-center gap-2 px-1 text-white bg-[linear-gradient(to_bottom,#8d9499,#41484d)]')}>
      <span className="w-[9px] h-[17px] bg-[radial-gradient(#222_1px,transparent_1px)] bg-size-[4px_4px]" />
      <span className="font-['Liberation_Serif',serif]">EN</span>
      <span className="size-[15px] rounded-full bg-[#1a2fb4] border border-[#c3cdf5] text-[11px] leading-[13px] text-center font-bold">?</span>
      <span className="flex flex-col items-center gap-[5px] ml-auto text-[7px] leading-[7px]"><span className="w-1 h-[2px] bg-white" />▼</span>
    </div>
  )
}

export default function App() {
  return (
    <div className="relative min-h-screen w-full overflow-hidden flex flex-col bg-black text-black">
      <div className="flex-1 flex flex-col">
        <TitleBar />
        <div className="flex-1 flex flex-col pl-[9px] bg-[linear-gradient(to_bottom,#c3d0e4_0,#c3d0e4_190px,#2d5a8c_260px,#27466c_560px,#5f9bcf_940px)]">
          <MenuBar />
          <div className="flex-1 flex">
            <Sidebar />
            <Canvas />
            <ToolBox />
          </div>
          <BottomBars />
        </div>
      </div>
      <Taskbar />
      <ResultsViewer />
      <ChecklistEditor />
      <Histogram />
      <MeasurePopup />
      <LanguageBar />
    </div>
  )
}
